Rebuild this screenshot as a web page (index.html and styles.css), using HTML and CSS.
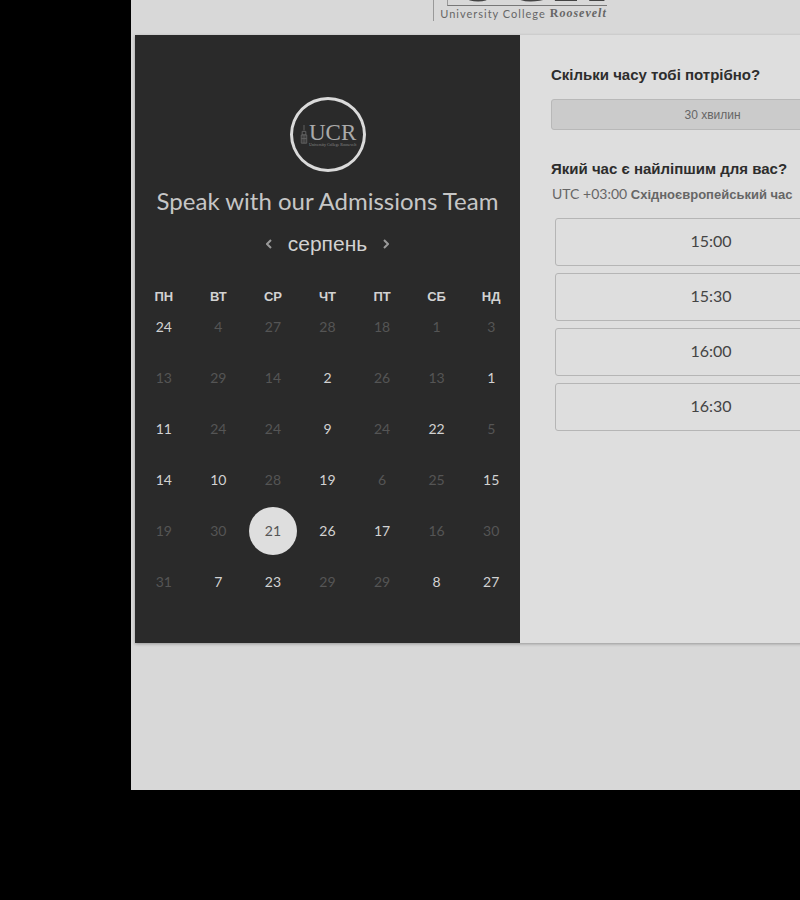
FILE: index.html
```html
<!DOCTYPE html>
<html lang="uk">
<head>
<meta charset="utf-8">
<meta name="viewport" content="width=device-width, initial-scale=1">
<title>Speak with our Admissions Team</title>
<link rel="stylesheet" href="styles.css">
</head>
<body>
<main class="page">
  <div class="content">
    <header class="brand">
      <div class="brand-logo">
        <div class="brand-mark">UCR</div>
        <div class="brand-name"><span>University College</span><b>R</b><em>oosevelt</em></div>
      </div>
    </header>
    <div class="booking">
      <section class="calendar">
        <div class="avatar">
          <svg class="avatar-tower" viewBox="0 0 8 22" aria-hidden="true"><path d="M4 0v6M2 7h4v4H2zM1 11h6v9H1zM3 12v8M5 12v8M1 15h6" fill="none" stroke="currentColor"/></svg>
          <div class="avatar-text"><span class="avatar-mark">UCR</span><span class="avatar-name">University College Roosevelt</span></div>
        </div>
        <h1>Speak with our Admissions Team</h1>
        <div class="month">
          <button type="button" aria-label="Попередній місяць"><svg viewBox="0 0 6 10"><path d="M5 1 1 5l4 4"/></svg></button>
          <h2>серпень</h2>
          <button type="button" aria-label="Наступний місяць"><svg viewBox="0 0 6 10"><path d="m1 1 4 4-4 4"/></svg></button>
        </div>
        <table class="days">
          <thead><tr><th>ПН</th><th>ВТ</th><th>СР</th><th>ЧТ</th><th>ПТ</th><th>СБ</th><th>НД</th></tr></thead>
          <tbody>
            <tr><td class="open">24</td><td>4</td><td>27</td><td>28</td><td>18</td><td>1</td><td>3</td></tr>
            <tr><td>13</td><td>29</td><td>14</td><td class="open">2</td><td>26</td><td>13</td><td class="open">1</td></tr>
            <tr><td class="open">11</td><td>24</td><td>24</td><td class="open">9</td><td>24</td><td class="open">22</td><td>5</td></tr>
            <tr><td class="open">14</td><td class="open">10</td><td>28</td><td class="open">19</td><td>6</td><td>25</td><td class="open">15</td></tr>
            <tr><td>19</td><td>30</td><td><button type="button" class="selected">21</button></td><td class="open">26</td><td class="open">17</td><td>16</td><td>30</td></tr>
            <tr><td>31</td><td class="open">7</td><td class="open">23</td><td>29</td><td>29</td><td class="open">8</td><td class="open">27</td></tr>
          </tbody>
        </table>
      </section>
      <section class="times">
        <h3>Скільки часу тобі потрібно?</h3>
        <button type="button" class="duration">30 хвилин</button>
        <h3>Який час є найліпшим для вас?</h3>
        <p class="zone"><span>UTC +03:00</span> Східноєвропейський час</p>
        <div class="slots">
          <button type="button">15:00</button>
          <button type="button">15:30</button>
          <button type="button">16:00</button>
          <button type="button">16:30</button>
        </div>
      </section>
    </div>
  </div>
</main>
</body>
</html>
```
FILE: styles.css
```css
* { box-sizing: border-box; }
body { margin: 0; background: #000; font-family: "Liberation Sans", Arial, sans-serif; }
h1, h2, h3, p { margin: 0; font-weight: 400; }
button { font: inherit; color: inherit; padding: 0; border: 0; background: none; cursor: pointer; }

.page { margin-left: 131px; padding: 0 4px 147px; background: #d8d8d8; overflow: hidden; }
.content { min-width: 770px; }

.brand { display: flex; justify-content: center; padding-bottom: 14px; }
.brand-logo { height: 21px; display: flex; flex-direction: column; justify-content: flex-end; padding-left: 6px; border-left: 1px solid #999; color: #666; white-space: nowrap; overflow: hidden; }
.brand-mark { margin-left: 7px; padding: 5px 0 0 4px; height: 60px; flex: none; border-left: 1px solid #999; border-bottom: 1px solid #777; font: 700 70px/54px "Liberation Serif", serif; color: #444; overflow: hidden; }
.brand-name { display: flex; font: 11px/15px Lato, sans-serif; letter-spacing: 1px; }
.brand-name span { margin-right: 4px; }
.brand-name b, .brand-name em { font: 700 12px/15px "Liberation Serif", serif; }
.brand-name em { font-style: italic; }

.booking { display: grid; grid-template-columns: 385px minmax(385px, 1fr); min-height: 608px; background: #dedede; box-shadow: 0 1px 3px rgba(0, 0, 0, .3); }
.calendar { background: #2a2a2a; color: #d2d2d2; padding: 62px 0 23px; display: flex; flex-direction: column; align-items: center; }

.avatar { width: 76px; height: 75px; border: 3px solid #dadada; border-radius: 50%; display: flex; align-items: center; justify-content: center; gap: 1px; color: #aaa; }
.avatar-tower { width: 8px; height: 20px; color: #666; }
.avatar-text { display: flex; flex-direction: column; width: 46px; }
.avatar-mark { font: 23px/20px "Liberation Serif", serif; }
.avatar-name { font: 4px/4px "Liberation Serif", serif; color: #888; white-space: nowrap; }

h1 { font: 24px/32px Lato, sans-serif; margin-top: 13px; color: #c6c6c6; }
.month { display: flex; align-items: center; gap: 16px; margin-top: 14px; }
.month h2 { font-size: 21px; line-height: 26px; }
.month button { display: flex; color: #999; }
.month svg { width: 6px; height: 10px; fill: none; stroke: currentColor; stroke-width: 2; }

.days { width: 382px; margin-top: 30px; border-collapse: collapse; table-layout: fixed; text-align: center; }
.days th { height: 20px; padding: 0; font-size: 13px; line-height: 16px; vertical-align: middle; }
.days td { height: 51px; padding: 12px 0 0; font: 14px/16px Lato, sans-serif; vertical-align: top; color: #555; }
.days .open { color: #d2d2d2; }
.days .selected { width: 48px; height: 48px; margin: -17px 0 -16px; border-radius: 50%; background: #dedede; color: #555; }

.times { padding: 30px 31px; color: #2d2d2d; }
.times h3 { font-size: 15px; line-height: 20px; font-weight: 700; }
.duration { display: block; width: 100%; height: 31px; margin: 14px 0 29px; border: 1px solid #b8b8b8; border-radius: 3px; background: #cbcbcb; color: #666; font-size: 12px; }
.zone { margin: 5px 1px 0; color: #666; font-size: 13px; line-height: 20px; font-weight: 700; white-space: nowrap; }
.zone span { font: 14px/20px Lato, sans-serif; }
.slots { display: grid; gap: 7px; padding: 13px 7px 0 4px; }
.slots button { height: 48px; padding-bottom: 2px; border: 1px solid #b5b5b5; border-radius: 3px; color: #444; font: 16px/20px Lato, sans-serif; }
```
